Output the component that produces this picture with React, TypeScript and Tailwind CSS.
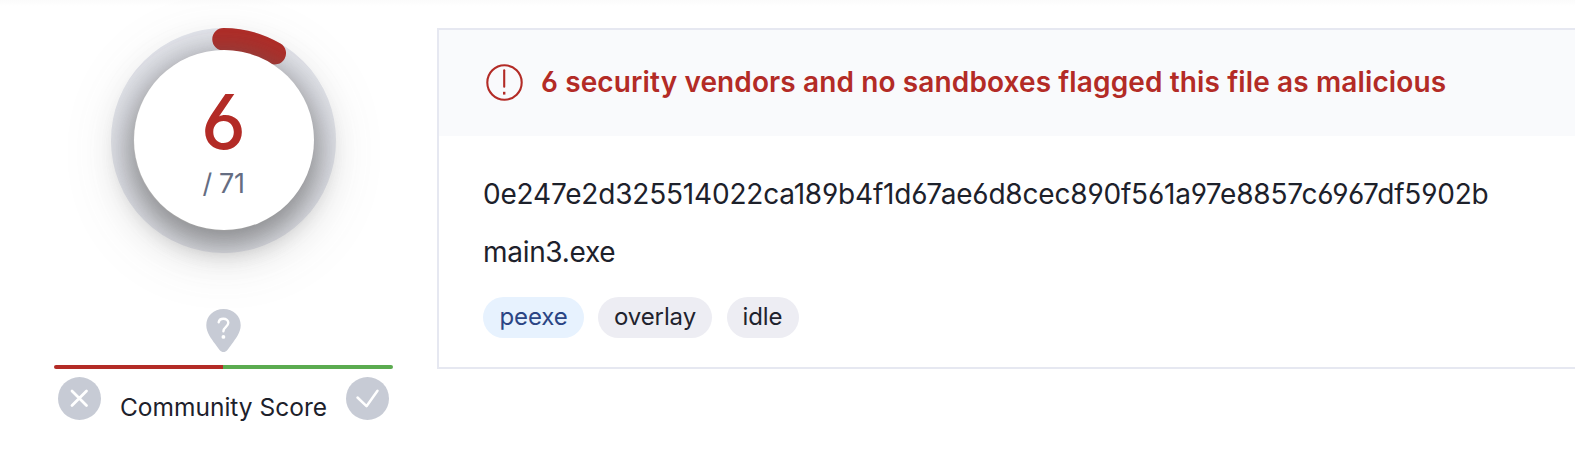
import type { ReactNode } from "react";

const DETECTIONS = 6;
const ENGINES = 71;
const RADIUS = 101.25;
const CIRCUMFERENCE = 2 * Math.PI * RADIUS;

const tags = [
  { label: "peexe", style: "w-[101px] bg-[#e7f2fe] text-[#2b4584]" },
  { label: "overlay", style: "w-[114px] bg-[#ededf3] text-[#1f232e]" },
  { label: "idle", style: "w-[72px] ml-[0.5px] bg-[#ededf3] text-[#1f232e]" },
];

function Gauge() {
  return (
    <div className="relative grid size-[225px] place-items-center">
      <svg className="absolute inset-0" width="225" height="225" viewBox="0 0 225 225" fill="none">
        <circle cx="112.5" cy="112.5" r={RADIUS} stroke="#e6e8ef" strokeWidth="22.5" />
        <circle
          cx="112.5"
          cy="112.5"
          r={RADIUS}
          stroke="#b32b26"
          strokeWidth="22.5"
          strokeLinecap="round"
          strokeDasharray={`${(CIRCUMFERENCE * DETECTIONS) / ENGINES} ${CIRCUMFERENCE}`}
          transform="rotate(-90 112.5 112.5)"
        />
      </svg>
      <div className="relative mb-px flex size-[180px] flex-col items-center rounded-full bg-white pt-[31px] shadow-[0_10px_30px_5px_rgba(95,95,95,0.62),0_12px_64px_6px_rgba(95,95,95,0.22)]">
        <span className="text-[76px] leading-[80px] font-medium text-[#b32b26]">{DETECTIONS}</span>
        <span className="text-[27px] leading-[46px] tracking-[-0.4px] text-[#656d82]">/ {ENGINES}</span>
      </div>
    </div>
  );
}

function Badge({ children }: { children: ReactNode }) {
  return (
    <svg width="43" height="43" viewBox="0 0 43 43" fill="none" stroke="#fff" strokeWidth="2.8" strokeLinecap="round" strokeLinejoin="round">
      <circle cx="21.5" cy="21.5" r="21.5" fill="#c7cbd5" stroke="none" />
      {children}
    </svg>
  );
}

export default function App() {
  return (
    <div className="flex h-[452px] w-full overflow-hidden bg-white bg-linear-to-b from-[#fbfbfb] to-white to-[6px] font-['Inter',sans-serif] font-normal text-[#1d212b] [font-feature-settings:'cv03','cv04']">
      <aside className="ml-[54px] flex w-[339px] shrink-0 flex-col items-center pt-[28px]">
        <Gauge />
        <svg className="mt-[56px]" width="35" height="43" viewBox="0 0 35 43" fill="none">
          <path d="M17.5 0C7.6 0 .3 7.1.3 16.2c0 7.4 5.2 13.6 8.7 18.6 2.3 3.3 4 5.7 5.6 7.2 1.7 1.5 4.1 1.5 5.8 0 1.6-1.5 3.3-3.9 5.6-7.2 3.5-5 8.7-11.2 8.7-18.6C34.700 7.100 27.400 0 17.500 0Z" fill="#c7cbd5" />
          <path d="M12.700 13.200c.4-2.200 2.200-3.500 4.600-3.500 2.900 0 5 1.700 5 4.100 0 3.900-4.900 4.200-4.900 8.500" stroke="#fff" strokeWidth="2.400" strokeLinecap="round" />
          <circle cx="17.400" cy="27.900" r="1.900" fill="#fff" />
        </svg>
        <div className="mt-[13px] flex h-1 w-full overflow-hidden rounded-full">
          <div className="w-[169px] bg-[#b32b26]" />
          <div className="flex-1 bg-[#5bab50]" />
        </div>
        <div className="mt-2 flex w-full items-start justify-between px-1">
          <Badge><path d="m14 14 14.500 14.500M28.500 14 14 28.500" /></Badge>
          <span className="mt-[15px] text-[24.5px] leading-[30px] whitespace-nowrap">Community Score</span>
          <Badge><path d="m11.500 20.500 9 8.700 11-15.500" strokeWidth="2.500" /></Badge>
        </div>
      </aside>

      <main className="mt-[28px] ml-[44px] h-[341px] min-w-0 flex-1 border-2 border-r-0 border-[#e6e8f1] bg-white">
        <header className="flex h-[106px] items-center gap-[18px] bg-[#f9fafc] pl-[47px] text-[#b32b26]">
          <svg className="mb-px" width="37" height="37" viewBox="0 0 37 37" fill="none" stroke="currentColor" strokeWidth="2.100">
            <circle cx="18.500" cy="18.500" r="17.200" />
            <path d="M18.200 6.300v16.500" strokeLinecap="round" />
            <path d="M18.200 27.800v2.800" strokeWidth="2.400" />
          </svg>
          <h1 className="pb-[2px] text-[28px] leading-10 font-semibold tracking-[0.12px] whitespace-nowrap">
            6 security vendors and no sandboxes flagged this file as malicious
          </h1>
        </header>
        <div className="pt-[29px] pl-[44px] text-[28px] leading-[58px]">
          <p className="tracking-[-0.19px]">0e247e2d325514022ca189b4f1d67ae6d8cec890f561a97e8857c6967df5902b</p>
          <p className="tracking-[-0.3px]">main3.exe</p>
          <ul className="mt-4 flex gap-[14px] text-2xl leading-[39px] tracking-[-0.1px]">
            {tags.map((tag) => (
              <li key={tag.label} className={`h-[41px] rounded-full text-center ${tag.style}`}>{tag.label}</li>
            ))}
          </ul>
        </div>
      </main>
    </div>
  );
}
